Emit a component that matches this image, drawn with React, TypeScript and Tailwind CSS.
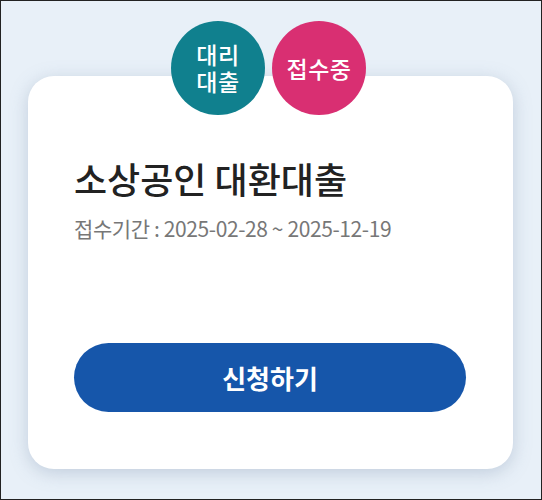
export default function App() {
  return (
    <div
      className="w-[542px] h-[500px] bg-[#e8f0f8] border border-[#222] overflow-hidden"
      style={{ fontFamily: '"Noto Sans CJK KR", "Noto Sans", sans-serif' }}
    >
      <div className="relative pt-[75px] pl-[27px]">
        <div className="absolute left-[170px] top-[20px] flex gap-[7px] z-10">
          <div className="w-[94px] h-[94px] rounded-full bg-[#10808e] flex flex-col items-center justify-center text-white text-[23px] font-medium leading-[27px] tracking-[0.5px]">
            <span>대리</span>
            <span>대출</span>
          </div>
          <div className="w-[94px] h-[94px] rounded-full bg-[#d92f72] flex items-center justify-center text-white text-[23px] font-medium tracking-[0.5px]">
            접수중
          </div>
        </div>
        <div className="w-[485px] h-[393px] bg-white rounded-[26px] shadow-[0_4px_18px_rgba(120,140,170,0.35)] flex flex-col px-[46px] pt-[80px]">
          <h1 className="text-[36px] font-medium text-[#222] leading-[44px]">소상공인 대환대출</h1>
          <p className="mt-[15px] text-[21px] text-[#777] leading-[26px] tracking-[-0.4px]">
            접수기간 : 2025-02-28 ~ 2025-12-19
          </p>
          <button className="mt-[102px] w-[392px] h-[69px] rounded-full bg-[#1656aa] text-white text-[26px] font-bold">
            신청하기
          </button>
        </div>
      </div>
    </div>
  );
}
